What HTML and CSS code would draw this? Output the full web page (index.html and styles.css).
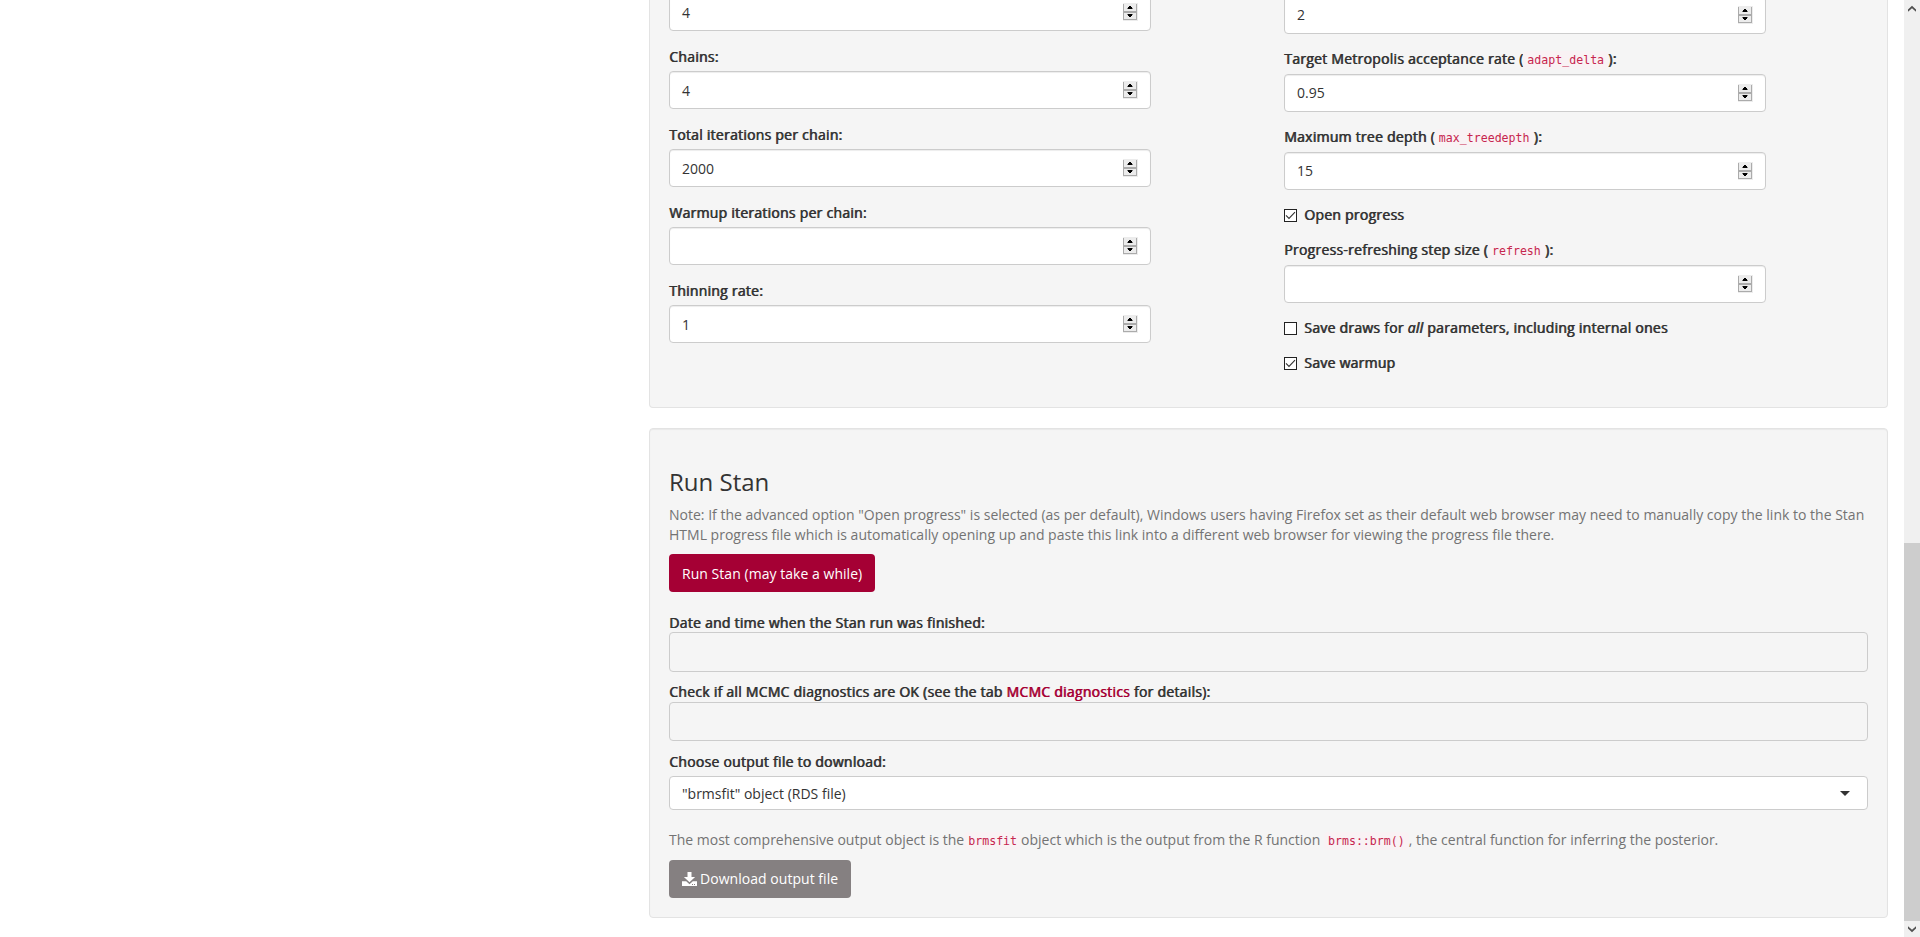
FILE: index.html
```html
<!DOCTYPE html>
<html lang="en">
<head>
<meta charset="utf-8">
<title>Run Stan</title>
<link rel="stylesheet" href="styles.css">
</head>
<body>
<svg class="defs" width="0" height="0">
  <symbol id="spin" viewBox="0 0 15 18">
    <rect width="15" height="18" fill="#ececec"/>
    <path d="M0.5 1V17M13.5 1V17M0 8.5H14M0 9.5H14M0 16.5H14" stroke="#ababab" fill="none"/>
    <path d="M6 3h2v1h1v1H5V4h1zM4.500 5h5v1h-5zM4.500 11h5v1h-5zM5 12h4v1H8v1H6v-1H5z" fill="#000"/>
  </symbol>
</svg>
<div class="page">
  <main class="main">
    <section class="well advanced">
      <div class="col left">
        <div class="group"><div class="input"><span>4</span><svg class="spin"><use href="#spin"/></svg></div></div>
        <div class="group"><label class="label">Chains:</label><div class="input"><span>4</span><svg class="spin"><use href="#spin"/></svg></div></div>
        <div class="group"><label class="label">Total iterations per chain:</label><div class="input"><span>2000</span><svg class="spin"><use href="#spin"/></svg></div></div>
        <div class="group"><label class="label">Warmup iterations per chain:</label><div class="input"><span></span><svg class="spin"><use href="#spin"/></svg></div></div>
        <div class="group"><label class="label">Thinning rate:</label><div class="input"><span>1</span><svg class="spin"><use href="#spin"/></svg></div></div>
      </div>
      <div class="col right">
        <div class="group"><div class="input"><span>2</span><svg class="spin"><use href="#spin"/></svg></div></div>
        <div class="group"><label class="label">Target Metropolis acceptance rate (<code>adapt_delta</code>):</label><div class="input"><span>0.95</span><svg class="spin"><use href="#spin"/></svg></div></div>
        <div class="group"><label class="label">Maximum tree depth (<code>max_treedepth</code>):</label><div class="input"><span>15</span><svg class="spin"><use href="#spin"/></svg></div></div>
        <div class="check"><svg class="box" viewBox="0 0 13 13"><rect x=".5" y=".5" width="12" height="12" fill="#fff" stroke="#222"/><path d="M2 6.300l3 3.200L11 3.200" fill="none" stroke="#333" stroke-width="1.100"/></svg><span>Open progress</span></div>
        <div class="group"><label class="label">Progress-refreshing step size (<code>refresh</code>):</label><div class="input"><span></span><svg class="spin"><use href="#spin"/></svg></div></div>
        <div class="check"><svg class="box" viewBox="0 0 13 13"><rect x=".5" y=".5" width="12" height="12" fill="#fff" stroke="#222"/></svg><span>Save draws for <em>all</em> parameters, including internal ones</span></div>
        <div class="check"><svg class="box" viewBox="0 0 13 13"><rect x=".5" y=".5" width="12" height="12" fill="#fff" stroke="#222"/><path d="M2 6.300l3 3.200L11 3.200" fill="none" stroke="#333" stroke-width="1.100"/></svg><span>Save warmup</span></div>
      </div>
    </section>
    <section class="well run">
      <h3 class="title">Run Stan</h3>
      <p class="help note">Note: If the advanced option "Open progress" is selected (as per default), Windows users having Firefox set as their default web browser may need to manually copy the link to the Stan<br>HTML progress file which is automatically opening up and paste this link into a different web browser for viewing the progress file there.</p>
      <button class="btn primary">Run Stan (may take a while)</button>
      <div class="strong first">Date and time when the Stan run was finished:</div>
      <div class="output"></div>
      <div class="strong">Check if all MCMC diagnostics are OK (see the tab <a class="link">MCMC diagnostics</a> for details):</div>
      <div class="output"></div>
      <label class="label choose">Choose output file to download:</label>
      <div class="select"><span>"brmsfit" object (RDS file)</span><i class="caret"></i></div>
      <p class="help out">The most comprehensive output object is the<code>brmsfit</code>object which is the output from the R function <code>brms::brm()</code>, the central function for inferring the posterior.</p>
      <button class="btn download"><svg class="dl" viewBox="0 0 15 14"><path d="M5.5 0h4v5h3.6L7.5 10.2 1.9 5h3.6z" fill="#fff"/><path d="M0 9.3h4.2l3.3 2.9 3.3-2.9H15V14H0z" fill="#fff"/><path d="M10 12h1v1h-1zM12 12h1v1h-1z" fill="#858081"/></svg><span>Download output file</span></button>
    </section>
  </main>
  <div class="scrollbar">
    <svg class="arrow" viewBox="0 0 16 16"><path d="M4 11.700V9.400L8 5.800l4 3.600v2.300L8 8.200z" fill="#505050"/></svg>
    <div class="thumb"></div>
    <svg class="arrow" viewBox="0 0 16 16"><path d="M4 5.300v2.300l4 3.600 4-3.600V5.300L8 8.800z" fill="#505050"/></svg>
  </div>
</div>
</body>
</html>
```
FILE: styles.css
```css
* { box-sizing: border-box; }
body { margin: 0; background: #fff; color: #333; font: 14px/20px "Open Sans", sans-serif; overflow: hidden; }
.defs { display: block; }
.page { display: flex; height: 937px; overflow: hidden; }
.main { flex: 1; padding: 0 16px 0 649px; white-space: nowrap; }
.well { background: #f5f5f5; border: 1px solid #e3e3e3; border-radius: 4px; padding: 19px; box-shadow: inset 0 1px 1px rgba(0,0,0,.05); }
.advanced { height: 408px; border-top: 0; border-radius: 0 0 4px 4px; padding-top: 0; display: flex; gap: 133px; box-shadow: none; }
.col { width: 482px; margin-top: -7px; }
.right { margin-top: -4px; }
.group { margin-bottom: 15px; }
.label, .strong, .check { text-shadow: .7px 0 0 currentColor; letter-spacing: .25px; }
.label { display: block; height: 20px; margin-bottom: 5px; }
.left .label, .choose { padding-top: 1px; }
.input { display: flex; align-items: center; justify-content: space-between; height: 38px; padding: 0 12px; background: #fff; border: 1px solid #ccc; border-radius: 4px; box-shadow: inset 0 1px 1px rgba(0,0,0,.075); }
.left .input span, .select span, .primary { padding-top: 2px; }
.spin { width: 15px; height: 18px; }
.check { display: flex; gap: 7px; height: 20px; margin-bottom: 15px; }
.box { width: 13px; height: 13px; margin-top: 4px; }
code { font: 11.6px/16px "DejaVu Sans Mono", monospace; color: #c7254e; background: #f9f2f4; border-radius: 4px; padding: 2px 4px; letter-spacing: 0; text-shadow: none; }
.run { margin-top: 20px; height: 490px; }
.title { margin: 21px 0 10px; font-size: 24px; line-height: 26.4px; font-weight: 400; }
.help { margin: 0 0 10px; color: #737373; }
.note { margin-bottom: 9px; word-spacing: .03px; }
.btn { display: flex; align-items: center; height: 38px; padding: 0 13px; border: 0; border-radius: 4px; color: #fff; font: inherit; letter-spacing: .04px; background: #a50034; }
.btn.primary { padding-top: 2px; }
.download { background: #858081; gap: 3px; }
.dl { width: 15px; height: 14px; }
.first { margin-top: 20px; height: 20px; padding-top: .6px; }
.output { height: 39.3px; margin-bottom: 10px; border: 1px solid #ccc; border-radius: 4px; }
.link { color: #a50034; }
.select { display: flex; align-items: center; justify-content: space-between; height: 34px; padding: 0 17px 0 12px; background: #fff; border: 1px solid #ccc; border-radius: 4px; }
.caret { border: 5px solid transparent; border-top-color: #333; border-bottom: 0; }
.out { margin-top: 20px; }
.scrollbar { width: 16px; background: #f0f0f0; display: flex; flex-direction: column; }
.arrow { width: 16px; height: 16px; }
.thumb { height: 378px; margin-top: 527px; background: #cdcdcd; }
```
